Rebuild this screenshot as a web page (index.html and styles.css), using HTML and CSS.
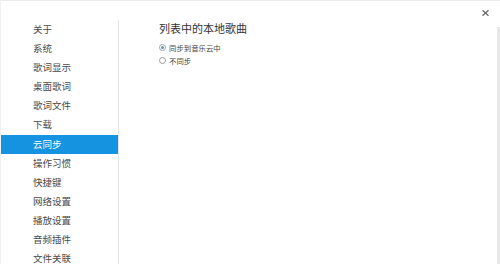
FILE: index.html
```html
<!DOCTYPE html>
<html lang="zh-CN">
<head>
<meta charset="utf-8">
<title>设置</title>
<link rel="stylesheet" href="styles.css">
</head>
<body>
<div class="window">
  <nav class="sidebar">
    <div class="item">关于</div>
    <div class="item">系统</div>
    <div class="item">歌词显示</div>
    <div class="item">桌面歌词</div>
    <div class="item">歌词文件</div>
    <div class="item">下载</div>
    <div class="item active">云同步</div>
    <div class="item">操作习惯</div>
    <div class="item">快捷键</div>
    <div class="item">网络设置</div>
    <div class="item">播放设置</div>
    <div class="item">音频插件</div>
    <div class="item">文件关联</div>
  </nav>
  <main class="main">
    <div class="topbar">
      <svg class="close" width="7" height="6" viewBox="0 0 7 6"><path d="M0.5 0.3 L6.5 5.7 M6.5 0.3 L0.5 5.7" stroke="#6b6b6b" stroke-width="1.4" fill="none"/></svg>
    </div>
    <h1 class="title">列表中的本地歌曲</h1>
    <div class="options">
      <label class="option"><span class="radio checked"></span><span class="label">同步到音乐云中</span></label>
      <label class="option"><span class="radio"></span><span class="label">不同步</span></label>
    </div>
  </main>
  <div class="scrollstrip"></div>
</div>
</body>
</html>
```
FILE: styles.css
```css
html, body {
  margin: 0;
  padding: 0;
  background: #ffffff;
  overflow: hidden;
}
body {
  font-family: "Noto Sans CJK SC", "Noto Sans", sans-serif;
  color: #333;
}
.window {
  display: flex;
  height: 264px;
  box-sizing: border-box;
  border-top: 1px solid #ebebeb;
  border-left: 1px solid #f1f1f1;
}
.sidebar {
  width: 117px;
  margin-top: 19px;
  border-right: 1px solid #e4e4e4;
  display: flex;
  flex-direction: column;
  flex-shrink: 0;
}
.item {
  height: 19.1px;
  line-height: 19.1px;
  padding-left: 32px;
  font-size: 9.5px;
  color: #4a4a4a;
  white-space: nowrap;
}
.item.active {
  background: #1693e0;
  color: #ffffff;
}
.main {
  flex: 1;
  display: flex;
  flex-direction: column;
  padding-left: 40px;
}
.topbar {
  height: 20px;
  display: flex;
  justify-content: flex-end;
  align-items: flex-start;
  padding-right: 8px;
}
.close {
  margin-top: 9px;
  display: block;
}
.title {
  margin: 0;
  font-size: 11px;
  font-weight: normal;
  line-height: 14px;
  color: #333;
}
.options {
  display: flex;
  flex-direction: column;
  margin-top: 6px;
}
.option {
  display: flex;
  align-items: center;
  height: 13px;
  gap: 3px;
}
.radio {
  width: 5px;
  height: 5px;
  border: 1px solid #9a9a9a;
  border-radius: 50%;
  background: #fff;
  display: flex;
  align-items: center;
  justify-content: center;
}
.radio.checked {
  border-color: #8fa6bf;
}
.radio.checked::after {
  content: "";
  width: 3px;
  height: 3px;
  border-radius: 50%;
  background: #6f8fb3;
}
.label {
  font-size: 7.4px;
  color: #444;
  white-space: nowrap;
}
.scrollstrip {
  width: 3px;
  margin-top: 26px;
  background: #e8e8e8;
  flex-shrink: 0;
}
```
